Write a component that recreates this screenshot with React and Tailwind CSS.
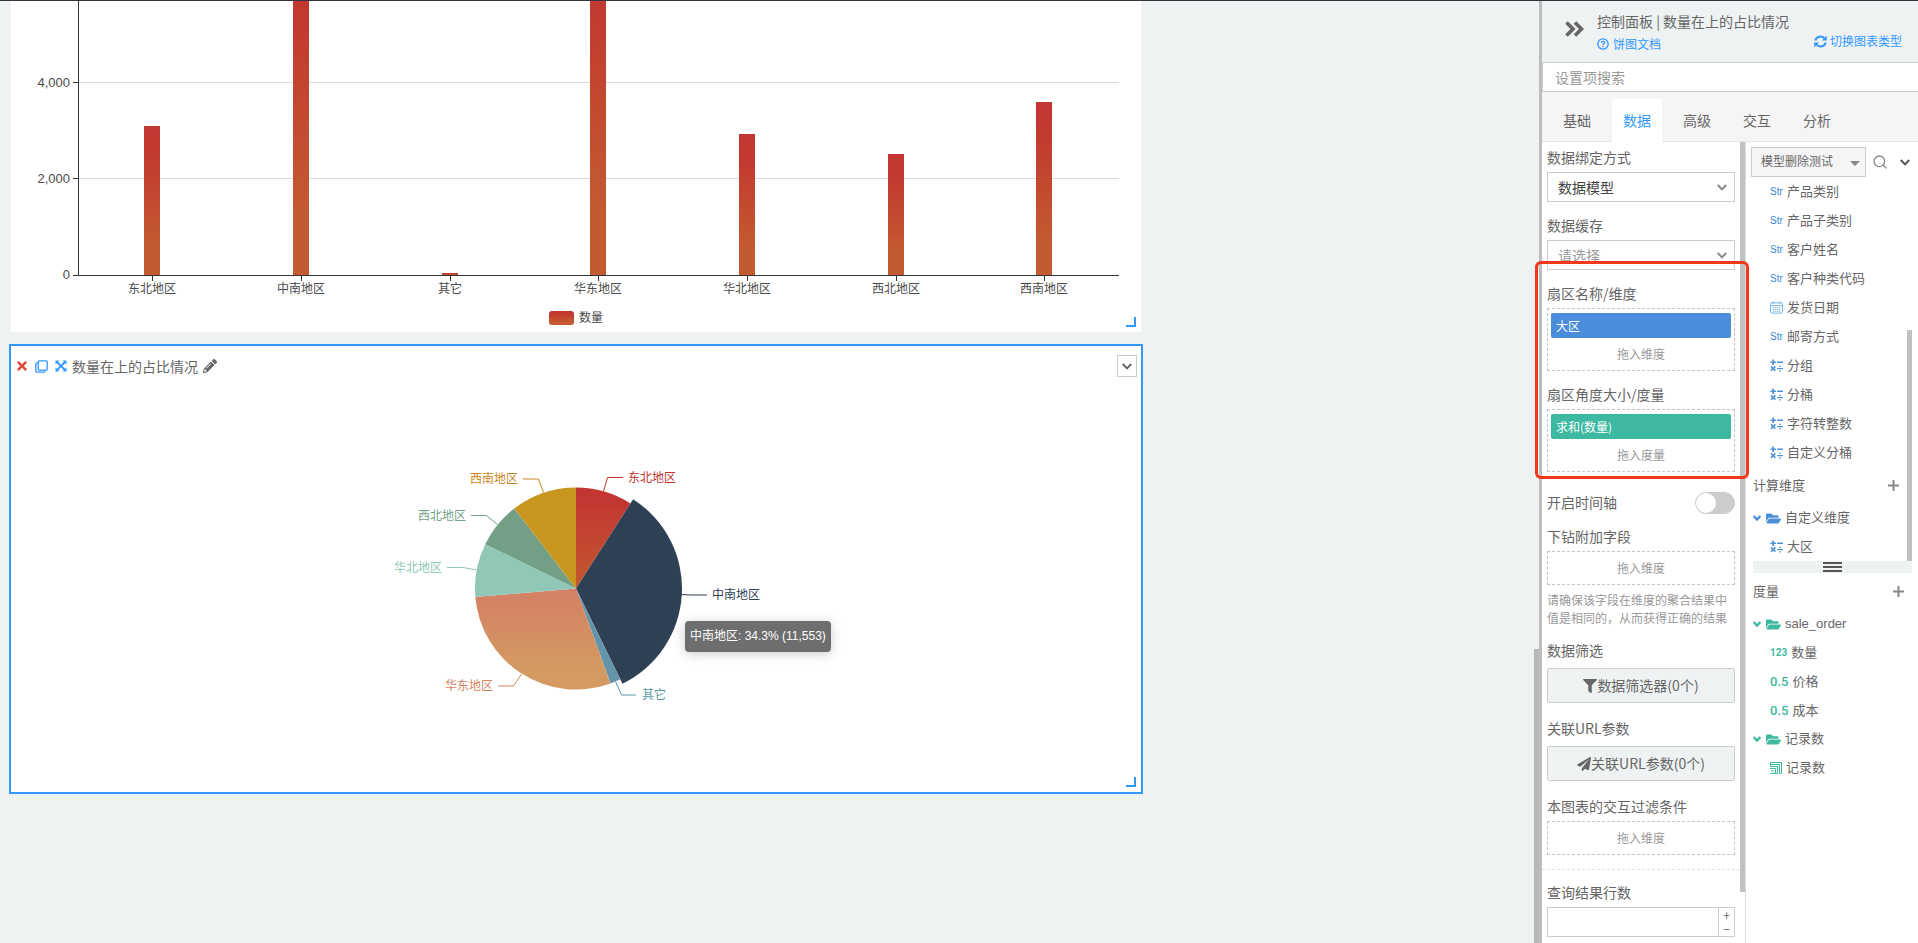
import { FaTimes, FaPencilAlt, FaFolderOpen, FaFilter, FaPaperPlane } from "react-icons/fa";
import { FiSearch } from "react-icons/fi";

const CJK = "font-['Liberation_Sans','Noto_Sans_CJK_SC',sans-serif]";
const UI = "font-['Noto_Sans_CJK_SC',sans-serif]";

const bars = [
  { name: "东北地区", x: 141, top: 125 },
  { name: "中南地区", x: 290, top: -40 },
  { name: "其它", x: 439, top: 272 },
  { name: "华东地区", x: 587, top: -60 },
  { name: "华北地区", x: 736, top: 133 },
  { name: "西北地区", x: 885, top: 153 },
  { name: "西南地区", x: 1033, top: 101 },
];

function BarChart() {
  return (
    <svg viewBox="8 0 1130 331" className="block w-full text-[12px] text-[#4a4a4a]" role="img" aria-label="数量">
      <defs>
        <linearGradient id="bar" x1="0" y1="0" x2="0" y2="1">
          <stop offset="0" stopColor="#c23531" />
          <stop offset="0.2" stopColor="#c23a30" />
          <stop offset="0.8" stopColor="#c35a30" />
          <stop offset="1" stopColor="#c35a30" />
        </linearGradient>
      </defs>
      <path d="M76 81.500H1116M76 177.500H1116" stroke="#d9d9d9" />
      {bars.map((b) => (
        <rect key={b.name} x={b.x} y={b.top} width="16" height={274.5 - b.top} fill="url(#bar)" />
      ))}
      <path d="M75.500 0V274.500M70 274.500H1116M70 81.500H75M70 177.500H75" stroke="#333" fill="none" />
      {bars.map((b) => (
        <g key={b.name}>
          <path d={`M${b.x + 8.5} 275v5`} stroke="#333" />
          <text x={b.x + 8} y="292" textAnchor="middle" fill="currentColor">{b.name}</text>
        </g>
      ))}
      <g className="text-[13px]" textAnchor="end" fill="currentColor">
        <text x="67" y="86">4,000</text>
        <text x="67" y="182">2,000</text>
        <text x="67" y="278">0</text>
      </g>
      <rect x="546" y="310" width="25" height="14" rx="3" fill="url(#bar)" />
      <text x="576" y="321" fill="currentColor">数量</text>
    </svg>
  );
}

const slices = [
  { name: "东北地区", from: 0, to: 32.6, r: 101, fill: "url(#pieRed)", color: "#c23531", line: "M233.500 41.500L237.500 27.500H253", tx: 258, ty: 32, anchor: "start" },
  { name: "中南地区", from: 32.6, to: 154, r: 106, fill: "#2f4054", color: "#2f4054", line: "M311 144.500L321 145H337", tx: 342, ty: 149, anchor: "start" },
  { name: "其它", from: 154, to: 160, r: 101, fill: "#6394a9", color: "#5a9aa4", line: "M245.500 231.500L251.500 245H266", tx: 272, ty: 249, anchor: "start" },
  { name: "华东地区", from: 160, to: 265.2, r: 101, fill: "url(#pieOrange)", color: "#d58265", line: "M151.500 224L143.500 236H128", tx: 123, ty: 240, anchor: "end" },
  { name: "华北地区", from: 265.2, to: 296, r: 101, fill: "#91c7b7", color: "#91c7b7", line: "M106.500 120L93 117.500H77", tx: 72, ty: 122, anchor: "end" },
  { name: "西北地区", from: 296, to: 322.300, r: 101, fill: "#749f87", color: "#749f87", line: "M127.500 74.500L116.500 65.500H101", tx: 96, ty: 70, anchor: "end" },
  { name: "西南地区", from: 322.300, to: 360, r: 101, fill: "#c99720", color: "#ca8622", line: "M173.500 42.500L168.500 29H153", tx: 148, ty: 33, anchor: "end" },
];

function slicePath({ from, to, r }) {
  const p = (a) => {
    const t = (a * Math.PI) / 180;
    return `${(206 + r * Math.sin(t)).toFixed(2)} ${(138.5 - r * Math.cos(t)).toFixed(2)}`;
  };
  return `M206 138.5L${p(from)}A${r} ${r} 0 ${to - from > 180 ? 1 : 0} 1 ${p(to)}Z`;
}

function PieChart() {
  return (
    <svg viewBox="6 0 400 270" className="block h-[270px] w-[400px] text-[12px]" role="img" aria-label="数量在上的占比情况">
      <defs>
        <linearGradient id="pieRed" x1="0" y1="0" x2="0" y2="1">
          <stop offset="0.1" stopColor="#c23531" />
          <stop offset="1" stopColor="#c35a30" />
        </linearGradient>
        <linearGradient id="pieOrange" x1="0" y1="0" x2="0" y2="1">
          <stop offset="0.1" stopColor="#d48265" />
          <stop offset="0.8" stopColor="#d49a62" />
        </linearGradient>
      </defs>
      {slices.map((s) => (
        <g key={s.name}>
          <path d={slicePath(s)} fill={s.fill} />
          <path d={s.line} fill="none" stroke={s.color} />
          <text x={s.tx} y={s.ty} textAnchor={s.anchor} fill={s.color}>{s.name}</text>
        </g>
      ))}
    </svg>
  );
}

function ResizeCorner() {
  return <span className="absolute right-[5px] bottom-[5px] size-[10px] border-r-2 border-b-2 border-[#3399ff]" />;
}

function CopyIcon() {
  return (
    <svg viewBox="0 0 13 13" className="size-[13px]" fill="none" stroke="#3399ff" strokeWidth="1.300">
      <rect x="3.200" y="0.800" width="9" height="9.400" rx="1" />
      <path d="M3 2.800H1.800a1 1 0 0 0-1 1v7.400a1 1 0 0 0 1 1h7a1 1 0 0 0 1-1v-1" />
    </svg>
  );
}

function ExpandIcon() {
  return (
    <svg viewBox="0 0 12 12" className="size-[12px]" fill="#3399ff" stroke="#3399ff">
      <path d="M2 2l8 8M10 2l-8 8" strokeWidth="1.800" />
      <path d="M.5.500h4l-4 4zM11.500.500v4l-4-4zM.5 11.500v-4l4 4zM11.500 11.500h-4l4-4z" stroke="none" />
    </svg>
  );
}

function CalcIcon() {
  return (
    <svg viewBox="0 0 13 13" className="size-[13px]" fill="none" stroke="#4a8fd8" strokeWidth="1.600">
      <path d="M.5 3.200h5.500M3.200.5v5.400M7.200 3.200H13M1 7.400l4.400 4.400M5.400 7.400L1 11.800" />
      <path d="M7.200 9.600H13" strokeWidth="1.200" />
      <path d="M9.400 7.400h1.500M9.400 11.900h1.500" strokeWidth="1.400" />
    </svg>
  );
}

function CalendarIcon() {
  return (
    <svg viewBox="0 0 14 13" className="h-[13px] w-[13px]" fill="none" stroke="#68ade0">
      <rect x=".5" y="1.500" width="13" height="11" rx="1.500" />
      <path d="M.5 4.500h13M3.500 0v2.500M10.500 0v2.500" />
      <path d="M3 6.700h8M3 8.600h8M3 10.500h8" strokeDasharray="1.500 .7" />
    </svg>
  );
}

function RecordIcon() {
  return (
    <svg viewBox="0 0 12 12" className="size-[12px]" fill="none" stroke="#3db9a0">
      <path d="M.5 4.500V.500h11v11H9.500M.5 2.500h9v9M.5 4.500h7v7M0 6.500h5.500v5M.5 11.500h7M1 9h3" />
    </svg>
  );
}

function Chevron({ className }) {
  return (
    <svg viewBox="0 0 10 7" className={className} fill="none" stroke="currentColor" strokeWidth="2">
      <path d="M.8 1l4.200 4.400L9.200 1" />
    </svg>
  );
}

function Label({ children, htmlFor, className = "mt-[10px]" }) {
  return <label htmlFor={htmlFor} className={`block h-7 text-[14px] leading-[26px] ${className}`}>{children}</label>;
}

function Select({ id, children, muted }) {
  return (
    <div className="relative">
      <select id={id} className={`h-[30px] w-full appearance-none border border-[#ccc] bg-white px-[10px] text-[14px] outline-none ${muted ? "text-[#999]" : "text-[#444]"}`}>
        <option>{children}</option>
      </select>
      <Chevron className="pointer-events-none absolute top-[12px] right-2 h-[7px] w-[10px] text-[#888]" />
    </div>
  );
}

function DropZone({ tag, tagClass, hint }) {
  return (
    <div className="border border-dashed border-[#c4c4c4] text-[12px]">
      {tag && <div className={`mx-[3px] mt-1 h-[25px] rounded-[2px] px-[5px] leading-[25px] text-white ${tagClass}`}>{tag}</div>}
      <div className="h-8 text-center leading-8 text-[#999]">{hint}</div>
    </div>
  );
}

function Field({ icon, children }) {
  return (
    <li className="flex h-[29px] items-center gap-[4px] pl-6">
      {icon}
      <span>{children}</span>
    </li>
  );
}

const Str = <span className="w-[13px] shrink-0 font-['Liberation_Sans',sans-serif] text-[10px] text-[#3d86d6]">Str</span>;
const Calc = <CalcIcon />;
const Decimal = <span className="font-['Roboto',sans-serif] text-[13px] font-medium text-[#3db9a0]">0.5</span>;

const fields = [
  ["产品类别", Str],
  ["产品子类别", Str],
  ["客户姓名", Str],
  ["客户种类代码", Str],
  ["发货日期", <CalendarIcon key="c" />],
  ["邮寄方式", Str],
  ["分组", Calc],
  ["分桶", Calc],
  ["字符转整数", Calc],
  ["自定义分桶", Calc],
];

function Folder({ color, children }) {
  return (
    <div className="flex h-7 items-center pl-[7px]">
      <Chevron className={`h-[6px] w-2 stroke-3 ${color}`} />
      <FaFolderOpen className={`ml-[5px] size-[15px] ${color}`} />
      <span className="ml-1">{children}</span>
    </div>
  );
}

function PlusButton({ label }) {
  return (
    <button aria-label={label} className="text-[#888]">
      <svg viewBox="0 0 11 11" className="size-[11px]" stroke="currentColor" strokeWidth="2"><path d="M0 5.500h11M5.500 0v11" /></svg>
    </button>
  );
}

function ControlPanel() {
  return (
    <aside className={`flex w-[379px] shrink-0 flex-col border-l-[3px] border-[#bdbdbd] bg-white text-[#666] ${UI}`}>
      <header className="flex h-[61px] shrink-0 bg-[#eef2f3] pr-4 pl-[23px]">
        <button aria-label="收起" className="mt-[10px] h-9">
          <svg viewBox="0 0 19 16" className="h-4 w-[19px]" fill="none" stroke="#666" strokeWidth="3.600"><path d="M1.500 1.500L8 8l-6.500 6.500M10 1.500L16.500 8 10 14.500" /></svg>
        </button>
        <div className="mt-[10px] ml-[13px] flex-1">
          <h2 className="mb-[3px] text-[14px] leading-[20px]">控制面板 | 数量在上的占比情况</h2>
          <a href="#doc" className="flex items-center gap-1 text-[12px] leading-[20px] text-[#3399ff]">
            <svg viewBox="0 0 12 12" className="size-[12px]" fill="none" stroke="currentColor" strokeWidth="1.300">
              <circle cx="6" cy="6" r="5.200" />
              <path d="M4.400 4.800c0-2 3.200-2 3.200-.2C7.600 5.800 6 5.700 6 7M6 8v1.200" />
            </svg>
            饼图文档
          </a>
        </div>
        <a href="#type" className="mt-[30px] flex h-5 items-center gap-[3px] text-[12px] text-[#3399ff]">
          <svg viewBox="0 0 13 13" className="size-[13px]" fill="none" stroke="currentColor" strokeWidth="2">
            <path d="M1.300 5.500C2.300 1.400 7.500.3 10.600 3.400M11.700 7.500C10.700 11.600 5.500 12.700 2.400 9.600" />
            <path d="M12.800.4v5H7.800zM.2 12.600v-5h5z" fill="currentColor" stroke="none" />
          </svg>
          切换图表类型
        </a>
      </header>
      <input aria-label="设置项搜索" placeholder="设置项搜索" className="h-[30px] shrink-0 border-y border-l border-[#ccc] bg-white px-3 text-[14px] outline-none placeholder:text-[#999]" />
      <nav className="flex h-[50px] shrink-0 items-end gap-[10px] border-b border-[#e8e8e8] bg-[#f5f5f5] pl-[10px] text-[14px]">
        {["基础", "数据", "高级", "交互", "分析"].map((t) => (
          <button key={t} className={`-mb-px h-[43px] w-[50px] rounded-t-[3px] ${t === "数据" ? "bg-white text-[#3399ff]" : ""}`}>{t}</button>
        ))}
      </nav>
      <div className="flex min-h-0 flex-1">
        <section className="flex w-[204px] shrink-0 overflow-hidden border-r border-[#ddd]">
          <div className="w-[198px] px-[5px]">
            <Label htmlFor="bind" className="mt-[2px]">数据绑定方式</Label>
            <Select id="bind">数据模型</Select>
            <Label htmlFor="cache">数据缓存</Label>
            <Select id="cache" muted>请选择</Select>
            <Label>扇区名称/维度</Label>
            <DropZone tag="大区" tagClass="bg-[#4a8ddb]" hint="拖入维度" />
            <Label>扇区角度大小/度量</Label>
            <DropZone tag="求和(数量)" tagClass="bg-[#3cb9a0]" hint="拖入度量" />
            <div className="mt-[17px] flex h-7 items-center justify-between text-[14px]">
              <label htmlFor="axis" className="h-7 leading-[26px]">开启时间轴</label>
              <input id="axis" type="checkbox" className="h-[22px] w-10 appearance-none rounded-full border border-[#ccc] bg-[#ccc] before:block before:size-5 before:rounded-full before:bg-white" />
            </div>
            <Label className="mt-[6px]">下钻附加字段</Label>
            <DropZone hint="拖入维度" />
            <p className="mt-[6px] text-[12px] leading-[18px] text-[#999]">请确保该字段在维度的聚合结果中值是相同的，从而获得正确的结果</p>
            <Label>数据筛选</Label>
            <button className="mt-[3px] flex h-[35px] w-full items-center justify-center rounded-[2px] border border-[#ccc] bg-[#eef2f3] text-[14px]"><FaFilter className="size-[14px]" />数据筛选器(0个)</button>
            <Label className="mt-3">关联URL参数</Label>
            <button className="mt-[3px] flex h-[35px] w-full items-center justify-center rounded-[2px] border border-[#ccc] bg-[#eef2f3] text-[14px]"><FaPaperPlane className="size-[14px]" />关联URL参数(0个)</button>
            <Label className="mt-3">本图表的交互过滤条件</Label>
            <DropZone hint="拖入维度" />
            <hr className="-mx-[5px] mt-[14px] border-dashed border-[#e4e4e4]" />
            <Label htmlFor="rows" className="mt-[9px]">查询结果行数</Label>
            <div className="flex h-[30px] border border-[#ccc]">
              <input id="rows" className="min-w-0 flex-1 px-2 text-[14px] outline-none" />
              <div className="flex w-4 flex-col border-l border-[#ccc] text-[12px] leading-[12px]">
                <button className="h-[14px]">+</button>
                <button className="h-[14px]">−</button>
              </div>
            </div>
          </div>
          <div className="h-[750px] w-[5px] bg-[#c1c1c1]" />
        </section>
        <section className={`min-w-0 flex-1 overflow-hidden text-[13px] ${CJK}`}>
          <div className="flex items-center pt-[5px] pl-[5px]">
            <div className="relative w-[115px]">
              <select aria-label="模型" className="h-[30px] w-full appearance-none border border-[#ccc] bg-[#f5f5f5] px-[9px] text-[12px] outline-none">
                <option>模型删除测试</option>
              </select>
              <span className="pointer-events-none absolute top-[14px] right-[6px] border-x-[5px] border-t-[5px] border-x-transparent border-t-[#888]" />
            </div>
            <button aria-label="搜索" className="ml-[6px]"><FiSearch className="size-4 text-[#888]" /></button>
            <button aria-label="展开" className="ml-3"><Chevron className="h-[7px] w-[10px] text-[#555]" /></button>
          </div>
          <div className="flex">
            <div className="min-w-0 flex-1">
              <ul>{fields.map(([name, icon]) => <Field key={name} icon={icon}>{name}</Field>)}</ul>
              <div className="flex h-[37px] items-center justify-between pr-2 pl-[7px]">计算维度<PlusButton label="添加计算维度" /></div>
              <Folder color="text-[#4a8fd8]">自定义维度</Folder>
              <ul><Field icon={Calc}>大区</Field></ul>
            </div>
            <div className="mt-[153px] mr-[6px] w-[5px] bg-[#c1c1c1]" />
          </div>
          <div className="mr-[6px] ml-[7px] flex h-3 flex-col items-center justify-center gap-[2px] bg-[#eef2f3]">
            <span className="h-[2px] w-[19px] bg-[#555]" />
            <span className="h-[2px] w-[19px] bg-[#555]" />
            <span className="h-[2px] w-[19px] bg-[#555]" />
          </div>
          <div className="flex h-[37px] items-center justify-between pr-[14px] pl-[7px]">度量<PlusButton label="添加度量" /></div>
          <Folder color="text-[#3db9a0]">sale_order</Folder>
          <ul>
            <Field icon={<span className="font-['Roboto',sans-serif] text-[10px] font-bold text-[#3db9a0]">123</span>}>数量</Field>
            <Field icon={Decimal}>价格</Field>
            <Field icon={Decimal}>成本</Field>
          </ul>
          <Folder color="text-[#3db9a0]">记录数</Folder>
          <ul><Field icon={<RecordIcon />}>记录数</Field></ul>
        </section>
      </div>
    </aside>
  );
}

export default function App() {
  return (
    <div className={`relative flex h-screen overflow-hidden border-t border-[#333340] bg-[#eef2f3] ${CJK}`}>
      <main className="min-w-0 flex-1 pl-[9px]">
        <section className="relative mx-[2px] max-w-[1130px] bg-white">
          <BarChart />
          <ResizeCorner />
        </section>
        <section className="relative mt-3 h-[450px] max-w-[1134px] border-2 border-[#3399ff] bg-white">
          <header className={`flex items-center pt-[9px] pr-1 pl-1 text-[#666] ${UI}`}>
            <button aria-label="删除" className="text-[#e04a3a]"><FaTimes className="size-[14px]" /></button>
            <button aria-label="复制" className="ml-[6px]"><CopyIcon /></button>
            <button aria-label="全屏" className="ml-[7px]"><ExpandIcon /></button>
            <h3 className="ml-[5px] text-[14px]">数量在上的占比情况</h3>
            <button aria-label="编辑" className="ml-[5px]"><FaPencilAlt className="size-[14px]" /></button>
            <button aria-label="更多" className="ml-auto flex h-[22px] w-5 items-center justify-center border border-[#ccc]"><Chevron className="h-[7px] w-[10px] text-[#666]" /></button>
          </header>
          <div className="relative mx-auto mt-[73px] w-[400px]">
            <PieChart />
            <div className="absolute top-[171px] left-[309px] h-[31px] rounded-[4px] bg-[#6e6e6e] px-[5px] text-[12px] leading-[31px] whitespace-nowrap text-white shadow-[0_2px_12px_rgba(0,0,0,0.2)]">中南地区: 34.3% (11,553)</div>
          </div>
          <ResizeCorner />
        </section>
      </main>
      <div className="flex w-[5px] shrink-0 flex-col justify-end"><div className="h-[294px] bg-[#b6b9b9]" /></div>
      <ControlPanel />
      <div className="pointer-events-none absolute top-[260px] right-[169px] h-[218px] w-[214px] rounded-[6px] border-[3px] border-[#f5371b]" />
    </div>
  );
}
